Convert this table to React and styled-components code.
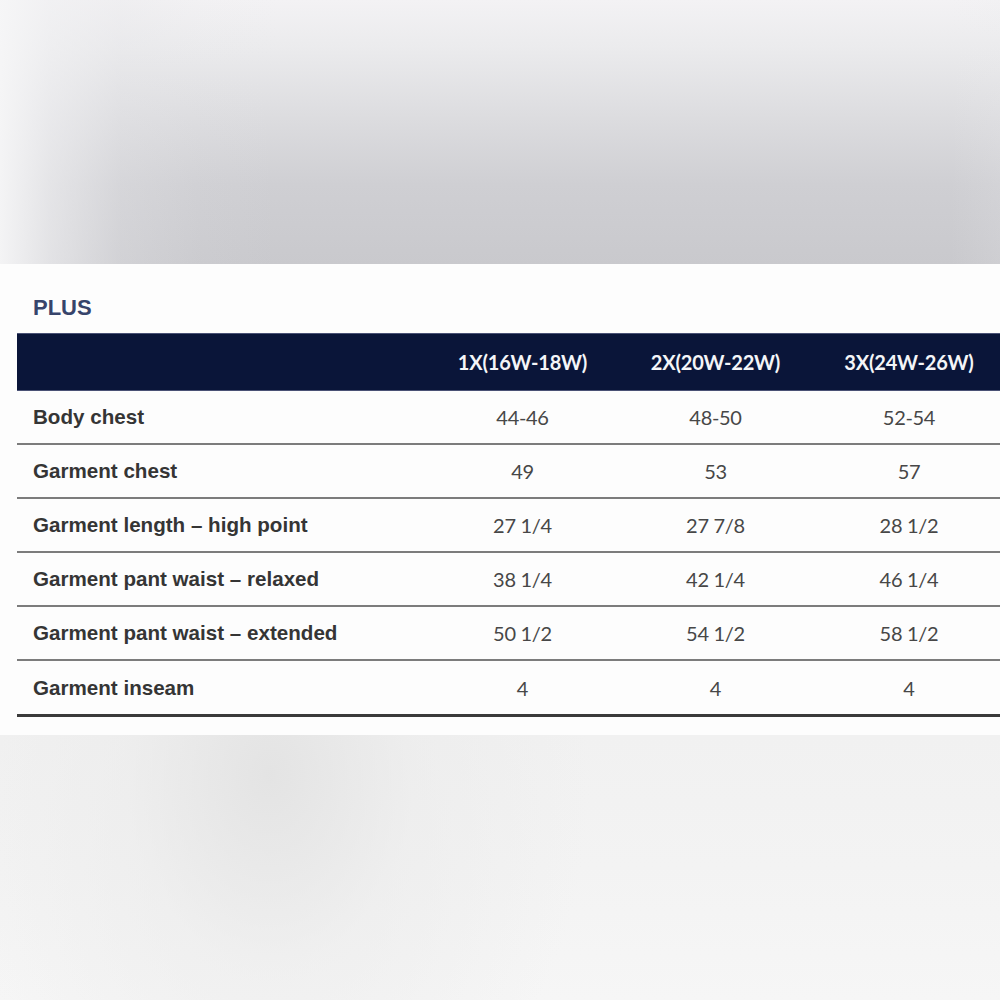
import React from "react";
import styled, { createGlobalStyle } from "styled-components";

const Global = createGlobalStyle`
  html, body { margin: 0; padding: 0; overflow: hidden; background: #f3f3f3; }
  body { font-family: "Liberation Sans", Arial, sans-serif; }
`;

const Page = styled.div`
  width: 1000px;
  height: 1000px;
  display: flex;
  flex-direction: column;
  overflow: hidden;
`;

const TopBlur = styled.div`
  height: 264px;
  flex: none;
  background:
    linear-gradient(90deg, rgba(246,246,247,0.95) 0%, rgba(240,240,242,0.65) 5%, rgba(230,230,233,0.3) 12%, rgba(230,230,233,0.08) 20%, rgba(230,230,233,0) 28%, rgba(230,230,233,0) 95%, rgba(236,236,238,0.15) 100%),
    linear-gradient(180deg, #f3f2f4 0%, #ebebed 18%, #dcdcdf 45%, #cfcfd3 70%, #c9c9cd 100%);
`;

const Panel = styled.div`
  height: 471px;
  flex: none;
  background: #fdfdfd;
  padding: 32px 0 0 17px;
  box-sizing: border-box;
  overflow: hidden;
`;

const Title = styled.div`
  font-family: "Liberation Sans", Arial, sans-serif;
  font-weight: 700;
  font-size: 22px;
  line-height: 24px;
  color: #37446b;
  padding-left: 16px;
  margin-bottom: 13px;
`;

const Table = styled.div`
  width: 989px;
  display: flex;
  flex-direction: column;
`;

const cols = "409px 193px 193px 194px";

const HeadRow = styled.div`
  display: grid;
  grid-template-columns: ${cols};
  height: 58px;
  align-items: center;
  background: #0a1539;
  box-shadow: inset 0 1px 0 #4a5275, inset 0 -1px 0 #4a5275;
`;

const HeadCell = styled.div`
  text-align: center;
  color: #f4f5f8;
  font-family: Lato, "Open Sans", sans-serif;
  font-weight: 700;
  font-size: 20px;
  letter-spacing: -0.2px;
`;

const Row = styled.div`
  display: grid;
  grid-template-columns: ${cols};
  height: ${(p) => (p.$last ? "56px" : "54px")};
  box-sizing: border-box;
  align-items: center;
  border-bottom: ${(p) => (p.$last ? "3px solid #3a3a3a" : "2px solid #7c7c7c")};
`;

const Label = styled.div`
  padding-left: 16px;
  font-family: "Liberation Sans", Arial, sans-serif;
  font-weight: 700;
  font-size: 20.6px;
  color: #353535;
`;

const Value = styled.div`
  text-align: center;
  font-family: Lato, "Open Sans", sans-serif;
  font-size: 20px;
  color: #474747;
  letter-spacing: -0.3px;
`;

const BottomBlur = styled.div`
  flex: 1;
  background:
    radial-gradient(ellipse 320px 420px at 270px 40px, rgba(226,226,226,0.9) 0%, rgba(234,234,234,0.5) 45%, rgba(240,240,240,0) 100%),
    linear-gradient(180deg, #f1f1f1 0%, #f3f3f3 50%, #f6f6f6 100%);
`;

const headers = ["1X(16W-18W)", "2X(20W-22W)", "3X(24W-26W)"];
const rows = [
  ["Body chest", "44-46", "48-50", "52-54"],
  ["Garment chest", "49", "53", "57"],
  ["Garment length \u2013 high point", "27 1/4", "27 7/8", "28 1/2"],
  ["Garment pant waist \u2013 relaxed", "38 1/4", "42 1/4", "46 1/4"],
  ["Garment pant waist \u2013 extended", "50 1/2", "54 1/2", "58 1/2"],
  ["Garment inseam", "4", "4", "4"],
];

export default function App() {
  return (
    <>
      <Global />
      <Page>
        <TopBlur />
        <Panel>
          <Title>PLUS</Title>
          <Table>
            <HeadRow>
              <div />
              {headers.map((h) => (
                <HeadCell key={h}>{h}</HeadCell>
              ))}
            </HeadRow>
            {rows.map((r, i) => (
              <Row key={r[0]} $last={i === rows.length - 1}>
                <Label>{r[0]}</Label>
                <Value>{r[1]}</Value>
                <Value>{r[2]}</Value>
                <Value>{r[3]}</Value>
              </Row>
            ))}
          </Table>
        </Panel>
        <BottomBlur />
      </Page>
    </>
  );
}
